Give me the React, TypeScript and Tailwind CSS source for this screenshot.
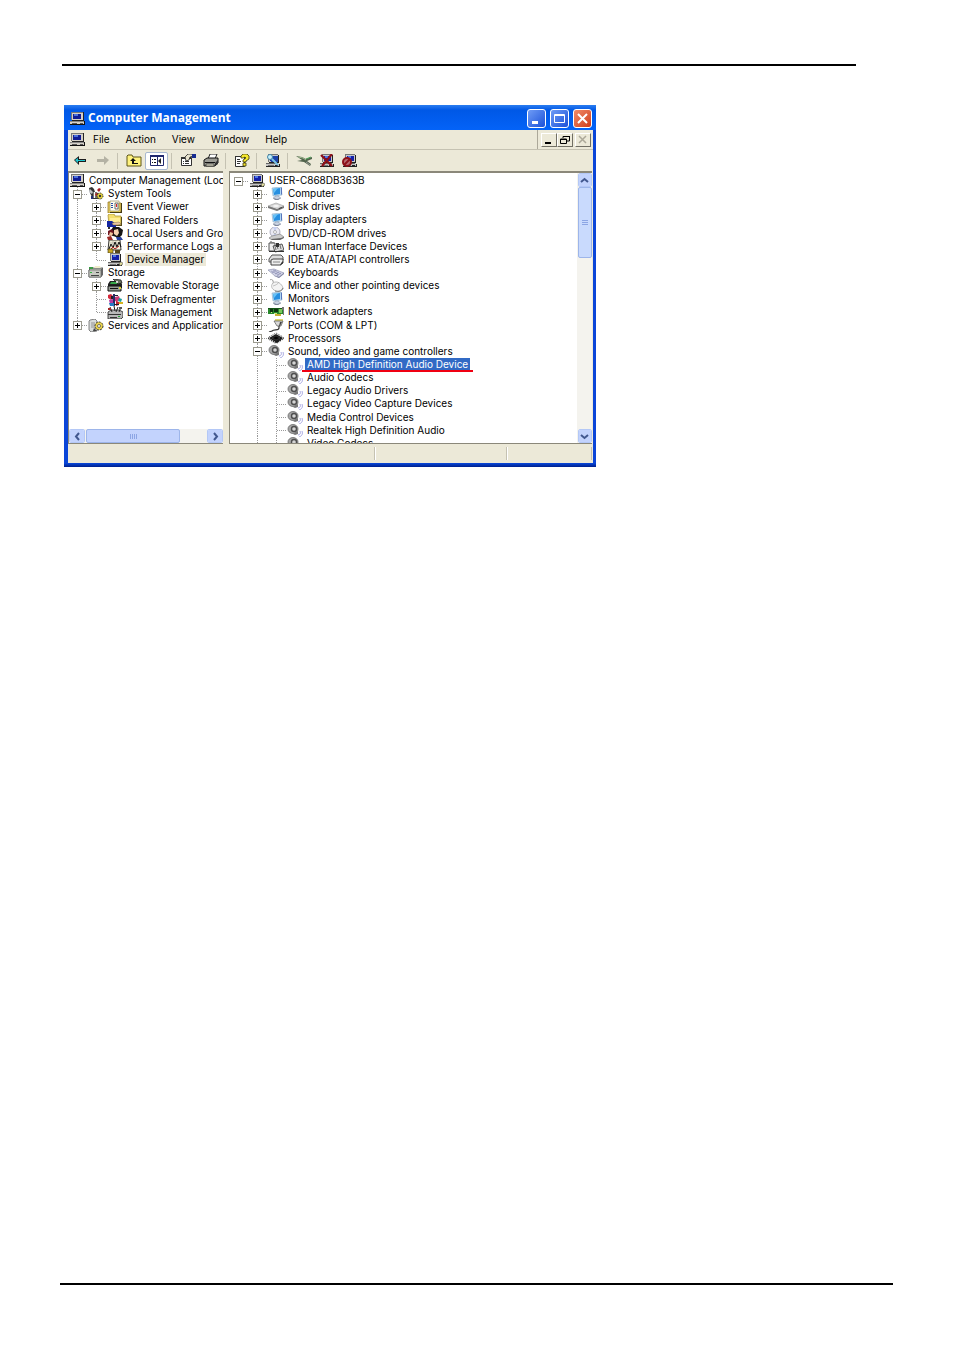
import React from 'react';

type IconProps = { name: string };

// one letter per guide column: l line, + / - box, p last + box, r root box, t tee, e elbow
type TreeNode = {
  guides: string;
  icon: string;
  label: string;
  state?: 'selected' | 'inactive';
};

const SCOPE_NODES: TreeNode[] = [
  { guides: '', icon: 'computer', label: 'Computer Management (Loc' },
  { guides: '-', icon: 'tools', label: 'System Tools' },
  { guides: 'l+', icon: 'event', label: 'Event Viewer' },
  { guides: 'l+', icon: 'shared', label: 'Shared Folders' },
  { guides: 'l+', icon: 'users', label: 'Local Users and Grou' },
  { guides: 'l+', icon: 'perf', label: 'Performance Logs a' },
  { guides: 'le', icon: 'pc', label: 'Device Manager', state: 'inactive' },
  { guides: '-', icon: 'storage', label: 'Storage' },
  { guides: 'l+', icon: 'removable', label: 'Removable Storage' },
  { guides: 'lt', icon: 'defrag', label: 'Disk Defragmenter' },
  { guides: 'le', icon: 'diskmgmt', label: 'Disk Management' },
  { guides: 'p', icon: 'services', label: 'Services and Application' },
];

const DEVICE_NODES: TreeNode[] = [
  { guides: 'r', icon: 'pc', label: 'USER-C868DB363B' },
  { guides: ' +', icon: 'monitor', label: 'Computer' },
  { guides: ' +', icon: 'disk', label: 'Disk drives' },
  { guides: ' +', icon: 'monitor', label: 'Display adapters' },
  { guides: ' +', icon: 'dvd', label: 'DVD/CD-ROM drives' },
  { guides: ' +', icon: 'hid', label: 'Human Interface Devices' },
  { guides: ' +', icon: 'ide', label: 'IDE ATA/ATAPI controllers' },
  { guides: ' +', icon: 'keyboard', label: 'Keyboards' },
  { guides: ' +', icon: 'mouse', label: 'Mice and other pointing devices' },
  { guides: ' +', icon: 'monitor', label: 'Monitors' },
  { guides: ' +', icon: 'network', label: 'Network adapters' },
  { guides: ' +', icon: 'port', label: 'Ports (COM & LPT)' },
  { guides: ' +', icon: 'cpu', label: 'Processors' },
  { guides: ' -', icon: 'sound', label: 'Sound, video and game controllers' },
  { guides: ' lt', icon: 'sound', label: 'AMD High Definition Audio Device', state: 'selected' },
  { guides: ' lt', icon: 'sound', label: 'Audio Codecs' },
  { guides: ' lt', icon: 'sound', label: 'Legacy Audio Drivers' },
  { guides: ' lt', icon: 'sound', label: 'Legacy Video Capture Devices' },
  { guides: ' lt', icon: 'sound', label: 'Media Control Devices' },
  { guides: ' lt', icon: 'sound', label: 'Realtek High Definition Audio' },
  { guides: ' lt', icon: 'sound', label: 'Video Codecs' },
];

const MENUS = ['File', 'Action', 'View', 'Window', 'Help'];

const TOOLBAR: string[] = [
  'back', 'forward', '|', 'up', 'showtree', '|', 'properties', 'print', '|', 'help', '|', 'scan', '|', 'update', 'uninstall', 'disable',
];

const TOOL_LABELS: Record<string, string> = {
  back: 'Back',
  forward: 'Forward',
  up: 'Up One Level',
  showtree: 'Show/Hide Console Tree',
  properties: 'Properties',
  print: 'Print',
  help: 'Help',
  scan: 'Scan for hardware changes',
  update: 'Update Driver',
  uninstall: 'Uninstall',
  disable: 'Disable',
};

const pcShape = (
  <>
    <path d="M3 0h10v8H3z" fill="#c8c8c8" />
    <path d="M3 0h10v1H4v7H3z" fill="#777" />
    <path d="M5 2h7v5H5z" fill="#1420a8" />
    <path d="M6 2h3v2H6z" fill="#4e78e8" />
    <path d="M13 1h1v8H4V8h9z" fill="#222" />
    <path d="M1 9h12l2 3H1z" fill="#c4c4c4" />
    <path d="M1 9h12v1H1z" fill="#666" />
    <path d="M1 12h14v1H1zM14 10h1v3h-1z" fill="#222" />
    <path d="M3 11h6v1H3z" fill="#777" />
    <path d="M10 11h3v1h-3z" fill="#222" />
  </>
);

const DRAWINGS: Record<string, React.ReactNode> = {
  computer: (
    <>
      <path d="M2 0h12v8H2z" fill="#d4d0c8" />
      <path d="M2 0h12v1H3v7H2z" fill="#777" />
      <path d="M4 2h8v5H4z" fill="#101c94" />
      <path d="M5 2h4v2H5z" fill="#4a70dc" />
      <path d="M14 0h1v9H3V8h11z" fill="#222" />
      <path d="M1 9h14v3H1z" fill="#d4d0c8" />
      <path d="M1 9h14v1H1z" fill="#888" />
      <path d="M1 12h15v1H1zM15 9h1v4h-1z" fill="#111" />
      <path d="M3 11h5v1H3zM11 11h3v1h-3z" fill="#555" />
    </>
  ),
  pc: (
    <>
      {pcShape}
      <path d="M12 10l3-1 1 2-3 2z" fill="#e0dc9c" stroke="#444" strokeWidth="0.5" />
    </>
  ),
  tools: (
    <>
      <path d="M1 1l3-1 2 2 1 3 3 1 1 6H5L2 6z" fill="#333" />
      <path d="M2 2l3 3-1 2-3-2z" fill="#bfc3c7" />
      <path d="M5 5h4v6H5z" fill="#777" />
      <path d="M6 5h1v6H6z" fill="#fff" />
      <path d="M9 3l2-2 2 1-2 3z" fill="#a51d23" />
      <path d="M7 7l2-1 1 2-2 1z" fill="#b82727" />
      <circle cx="12" cy="9" r="3" fill="#d9c83c" stroke="#222" strokeDasharray="1 1" />
      <path d="M11 8h2v2h-2z" fill="#333" />
      <path d="M3 9h2v3H3z" fill="#26307b" />
    </>
  ),
  event: (
    <>
      <path d="M1 2h5l1 1h7v8l-2 2H1z" fill="#e8cf62" stroke="#8a6c18" strokeWidth="0.7" />
      <path d="M3 1h9v10H3z" fill="#fffdf0" stroke="#8b824a" strokeWidth="0.6" />
      <path d="M4 3h2v1H4zM4 5h2v1H4zM4 7h2v1H4z" fill="#294ea9" />
      <path d="M8 3h3v6H8z" fill="#fff" stroke="#333" strokeWidth="0.7" />
      <path d="M9 4h1v3H9z" fill="#d22" />
      <path d="M14 3h1v10H3v-1h11z" fill="#443b13" />
    </>
  ),
  shared: (
    <>
      <path d="M1 1l1-1h5l1 2h6v9H2z" fill="#f3dd6c" stroke="#a58b2a" strokeWidth="0.7" />
      <path d="M3 4h10v5H3z" fill="#ffed94" />
      <path d="M14 3h1v9H6v-1h8z" fill="#55491a" />
      <path d="M0 7h5l4 3v3H0z" fill="#1425a0" />
      <path d="M5 9l7-1 2 2-3 1H6z" fill="#e9c6a0" stroke="#6c553f" strokeWidth="0.4" />
    </>
  ),
  users: (
    <>
      <path d="M6 0h6l4 3-1 5-3 3-7-2-2-4z" fill="#151515" />
      <path d="M7 3l4-1 1 4-2 3-3-2z" fill="#f6d2b1" />
      <path d="M1 4l4-2 2 3-2 4-4-1z" fill="#6f1722" />
      <path d="M3 5l3 1-1 3-3-1z" fill="#efc59c" />
      <path d="M5 9l4 1 2 3H4z" fill="#fff" />
      <path d="M9 10h5l2 3h-6z" fill="#253e9c" />
      <path d="M0 10l4-1 2 4H1z" fill="#9b2a25" />
      <path d="M1 0h2v2H1z" fill="#333" />
    </>
  ),
  perf: (
    <>
      <path d="M2 0h11l1 10H1z" fill="#f5f1d8" stroke="#222" strokeWidth="0.9" />
      <path d="M3 3h9M3 6h9M6 1v9M9 1v9" stroke="#8d8d8d" strokeWidth="0.5" />
      <path d="M2 9l2-5 2 4 2-6 2 5 2-5 2 5" fill="none" stroke="#111" />
      <path d="M3 10l3-3 2 2 4-3" fill="none" stroke="#b32020" />
      <path d="M1 9h5v4H1z" fill="#c8a726" stroke="#3a300a" strokeWidth="0.6" />
      <path d="M8 10h5v3H8z" fill="#55471a" />
    </>
  ),
  storage: (
    <>
      <path d="M1 4l2-2h12l-2 2v7H1z" fill="#b9bdb4" stroke="#444" strokeWidth="0.8" />
      <path d="M1 4h12v7H1z" fill="#c8cac2" stroke="#555" strokeWidth="0.6" />
      <path d="M13 4l2-2v7l-2 2z" fill="#666" />
      <path d="M1 1h4v2H1z" fill="#3b9a45" />
      <path d="M8 6h3v1H8zM3 9h8v1H3z" fill="#444" />
      <path d="M2 6h2v1H2z" fill="#36b441" />
      <path d="M7 0h5l1 2H6z" fill="#efeccb" />
    </>
  ),
  removable: (
    <>
      <path d="M1 5l2-3h9l3 3v4H1z" fill="#222" />
      <path d="M4 3h6l2 2H3z" fill="#35a748" />
      <path d="M6 0l8 1 1 3-4 1z" fill="#6c7563" stroke="#111" strokeWidth="0.7" />
      <path d="M1 7h13v5H1z" fill="#969c94" stroke="#111" />
      <path d="M3 9h8v1H3z" fill="#111" />
      <path d="M12 8h2v2h-2z" fill="#ded334" />
      <circle cx="10" cy="3" r="1" fill="#fff" />
    </>
  ),
  defrag: (
    <>
      <path d="M1 2l3-1 3 3-3 3-3-2z" fill="#d5283a" />
      <path d="M6 1h2v12H6z" fill="#2a2a6a" />
      <path d="M8 4l4-1 1 3-3 3-2-1z" fill="#ca3f78" />
      <path d="M2 7l4-1v4l-3 1z" fill="#b63aa0" />
      <path d="M12 5l3 1-1 3-3-1z" fill="#1b9f9b" />
      <path d="M2 10h5v3H3z" fill="#247ac5" />
      <path d="M9 8l3 1v3l-3 1z" fill="#c62134" />
      <path d="M12 9h4v2h-4z" fill="#d7b51f" />
      <path d="M4 3h2v3H4zM8 2h3v1H8zM7 11h5v1H7z" fill="#222" />
    </>
  ),
  diskmgmt: (
    <>
      <path d="M1 6l3-2h8l4 2v5l-2 2H1z" fill="#b8b8b8" stroke="#222" strokeWidth="0.8" />
      <path d="M1 8h13v1H1zM3 11h7v1H3z" fill="#333" />
      <path d="M3 1l2 5M7 0l1 5M11 1L9 6M14 1l-2 5" stroke="#222" />
      <path d="M1 2h3v2H1z" fill="#a42727" />
      <path d="M12 1h3v2h-3z" fill="#555" />
      <path d="M11 10h2v1h-2z" fill="#22a033" />
    </>
  ),
  services: (
    <>
      <path d="M2 1l5-1 2 2v10l-6 1-2-2V2z" fill="#d9dcdb" stroke="#555" strokeWidth="0.7" />
      <path d="M3 4h4M3 6h4M3 8h4" stroke="#777" strokeWidth="0.7" />
      <circle cx="11" cy="7" r="4" fill="#ead34b" stroke="#333" strokeDasharray="2 1" />
      <circle cx="11" cy="7" r="1.5" fill="#fff" stroke="#444" strokeWidth="0.7" />
      <path d="M6 9l3 3H5z" fill="#444" />
    </>
  ),
  monitor: (
    <>
      <path d="M4 1l9-1 1 8-9 1z" fill="#b2d8f4" stroke="#8cadc8" strokeWidth="0.6" />
      <path d="M5 2l7-1v6l-6 1z" fill="#278fe0" />
      <path d="M5 2l5-1-4 5z" fill="#68c2f6" />
      <path d="M13 0l1 1v7l-1-1z" fill="#5775bc" />
      <path d="M7 9h4v1l2 1-4 2-4-2 2-1z" fill="#c9d3e3" stroke="#8790a4" strokeWidth="0.5" />
      <path d="M5 11l4 1 4-1-3 2H7z" fill="#7e879b" />
    </>
  ),
  disk: (
    <>
      <path d="M0 6l8-3 8 3-7 4z" fill="#d8d8d8" stroke="#999" strokeWidth="0.6" />
      <path d="M0 6l9 3 7-3v2l-7 3-9-3z" fill="#777" />
      <ellipse cx="8" cy="6" rx="3" ry="1" fill="#f6f6f6" />
      <path d="M11 8l3-1v1l-3 1z" fill="#444" />
    </>
  ),
  dvd: (
    <>
      <circle cx="7" cy="5" r="5" fill="#e9e9f3" stroke="#9c9cae" strokeWidth="0.8" />
      <path d="M7 5L5 0h4zM7 5l2 5-4-1z" fill="#c6cff0" />
      <circle cx="7" cy="5" r="1.5" fill="#fff" stroke="#888" strokeWidth="0.6" />
      <path d="M1 11l3-2 8-2 4 3-3 2-9 1z" fill="#ccc" stroke="#777" strokeWidth="0.6" />
      <path d="M3 12l10-1 3-1v1l-4 2H4z" fill="#666" />
    </>
  ),
  hid: (
    <>
      <path d="M1 3h6v8H1z" fill="#eee" stroke="#555" />
      <path d="M3 1v2M5 2v1" stroke="#555" />
      <path d="M5 6l9-2 2 6-9 2z" fill="#ddd" stroke="#333" strokeWidth="0.8" />
      <path d="M7 6l1 4M9 6l1 3M12 5l1 4" stroke="#555" strokeWidth="0.8" />
      <path d="M8 3h3v4H8z" fill="#333" />
      <path d="M1 11h15v1H1z" fill="#333" />
    </>
  ),
  ide: (
    <>
      <path d="M1 6l3-4h9l2 2v3l-2 2H1z" fill="#ddd" stroke="#555" />
      <path d="M3 7l2-1h10v4l-3 2H3z" fill="#eee" stroke="#444" />
      <path d="M5 9h7" stroke="#888" />
      <path d="M13 10l2-2v2l-3 3z" fill="#333" />
    </>
  ),
  keyboard: (
    <>
      <path d="M0 4l6-1 10 4-5 4-4-1z" fill="#d4d6e8" stroke="#9093b0" strokeWidth="0.7" />
      <path d="M3 5l8 4M5 4l8 4M4 7l4-3M7 8l4-2M9 10l4-3" stroke="#8185ac" strokeWidth="0.6" />
      <path d="M6 10l5 1 5-4v1l-5 4z" fill="#777b9c" />
    </>
  ),
  mouse: (
    <>
      <path d="M2 1c2-2 4 1 3 4" fill="none" stroke="#999" />
      <path d="M5 4c4-3 9 1 10 5-1 4-7 4-9 2-3-2-3-5-1-7z" fill="#f4f4f4" stroke="#aaa" strokeWidth="0.8" />
      <path d="M5 7c3-1 5-2 6-4" fill="none" stroke="#aaa" strokeWidth="0.7" />
      <path d="M7 12c4 1 7 0 8-3" fill="none" stroke="#777" />
    </>
  ),
  network: (
    <>
      <path d="M0 3h15v6H0z" fill="#27872b" />
      <path d="M0 3h15v1H0z" fill="#165419" />
      <path d="M2 4h3v3H2zM6 4h4v3H6z" fill="#0e3512" />
      <path d="M11 4h3v4h-3z" fill="#7bc95b" />
      <path d="M7 9h6v2H7z" fill="#c6b135" />
      <path d="M14 2h2v8h-1V5h-1z" fill="#777" />
      <path d="M3 7h1v1H3zM6 8h3v1H6z" fill="#d1e783" />
    </>
  ),
  port: (
    <>
      <path d="M7 0h8v2H7z" fill="#e0d570" />
      <path d="M6 2h9l-2 5H9z" fill="#d9d9d9" stroke="#555" strokeWidth="0.7" />
      <path d="M11 7v2c0 3-5 1-7 3l-3 1" fill="none" stroke="#333" strokeWidth="1.2" />
      <path d="M12 3h2l-2 4h-1z" fill="#444" />
    </>
  ),
  cpu: (
    <>
      <path d="M1 6l7-4 7 4-6 5z" fill="#1c1c1c" />
      <path d="M4 6l4-2 4 2-4 2z" fill="#050505" stroke="#666" strokeWidth="0.4" />
      <path d="M0 6l8 5 8-5" fill="none" stroke="#222" strokeWidth="2" strokeDasharray="1 1" />
      <path d="M1 5l7-4 7 4" fill="none" stroke="#444" strokeDasharray="1 1" />
    </>
  ),
  sound: (
    <>
      <ellipse cx="6" cy="5" rx="5" ry="4.5" fill="#a6a6a6" stroke="#6a6a6a" strokeWidth="0.8" />
      <ellipse cx="7" cy="5" rx="3.2" ry="3.2" fill="#4e4e4e" />
      <ellipse cx="7" cy="5" rx="1.8" ry="1.8" fill="#d4d4d4" />
      <path d="M6 10l5-3v3l-3 1z" fill="#777" />
      <path d="M11 11c2 0 3-2 2-4M12 13c3-1 4-3 3-6" fill="none" stroke="#a9a9e2" />
    </>
  ),
  back: (
    <>
      <path d="M2 6l5-4v3h7v3H7v3z" fill="#1c1c1c" />
      <path d="M3 6l3-2v2h7v1H6v2z" fill="#1fc5cf" />
    </>
  ),
  forward: <path d="M14 6L9 2v3H2v3h7v3z" fill="#b4b2a4" />,
  up: (
    <>
      <path d="M1 2l1-1h4l1 2h8v9H1z" fill="#fff27c" stroke="#5c5416" />
      <path d="M4 7l3-3 3 3H8v2h4v1H6V7z" fill="#111" />
    </>
  ),
  showtree: (
    <>
      <path d="M1.500 1.500h13v10h-13z" fill="#fff" stroke="#222a6f" />
      <path d="M1 1h14v2H1z" fill="#222a6f" />
      <path d="M8.500 3v9" stroke="#222a6f" />
      <path d="M3 5h1v1H3zM5 5h2v1H5zM3 8h1v1H3zM5 8h2v1H5z" fill="#111" />
      <path d="M12 4v6L9 7z" fill="#222" />
    </>
  ),
  properties: (
    <>
      <path d="M1.500 3.500h10v8h-10z" fill="#fff" stroke="#333" />
      <path d="M1 3h10v2H1z" fill="#333" />
      <path d="M3 7h1v1H3zM5 7h4v1H5zM3 9h1v1H3zM5 9h4v1H5z" fill="#333" />
      <path d="M5 3l3-3h4l1 2-3 1-1 3-3 1z" fill="#e8e4ce" stroke="#222" strokeWidth="0.8" />
      <path d="M12 0h4v4h-4z" fill="#172c91" />
    </>
  ),
  print: (
    <>
      <path d="M5 5l2-5h7l-2 5z" fill="#fff" stroke="#222" />
      <path d="M1 6l3-2h11v5l-3 3H1z" fill="#9b9b94" stroke="#111" />
      <path d="M2 8h10v1H2z" fill="#111" />
      <path d="M3 10h8v2H3z" fill="#e0dfca" stroke="#111" strokeWidth="0.6" />
      <path d="M12 9l3-3v4l-3 2z" fill="#333" />
    </>
  ),
  help: (
    <>
      <path d="M1.500 2.500h9v10h-9z" fill="#fff" stroke="#333" />
      <path d="M1 2h10v1H1zM3 5h3v1H3zM3 7h4v1H3zM3 9h3v1H3z" fill="#333" />
      <path d="M7 4V2l2-2h4l2 2v3l-3 2v1H9V6l3-2-1-1-2 1zM9 9h3v3H9z" fill="#f5e72d" stroke="#3b380a" strokeWidth="0.8" />
    </>
  ),
  scan: (
    <>
      {pcShape}
      <path d="M5 2h8v6H6z" fill="#1b42a8" />
      <circle cx="5" cy="3" r="2.5" fill="#c7effa" stroke="#4387a8" />
      <path d="M7 5l6 6" stroke="#7cc3e5" strokeWidth="2" />
    </>
  ),
  update: (
    <>
      <path d="M0 2l6 1 4 2 6-2v2l-5 2 4 3-1 2-6-4-7-1 5-1z" fill="#51634c" />
      <path d="M2 3l5 1 3 2" stroke="#9fb98f" fill="none" />
      <path d="M10 8l4 3" stroke="#999" />
      <path d="M10 5l5-2" stroke="#46a052" />
    </>
  ),
  uninstall: (
    <>
      {pcShape}
      <path d="M2 1l11 11M13 0L3 12" stroke="#8d1018" strokeWidth="2.2" />
    </>
  ),
  disable: (
    <>
      {pcShape}
      <circle cx="5" cy="8" r="4" fill="#b56a72" stroke="#8d1018" strokeWidth="2" />
      <path d="M2 11l6-6" stroke="#8d1018" strokeWidth="2" />
    </>
  ),
};

const Icon: React.FC<IconProps> = ({ name }) => (
  <svg className="shrink-0" width="16" height="13" viewBox="0 0 16 13" aria-hidden="true">
    {DRAWINGS[name]}
  </svg>
);

const Guide: React.FC<{ kind: string }> = ({ kind }) => {
  const isBox = '+-pr'.includes(kind);
  const up = 'l+-pte'.includes(kind);
  const down = 'l+-t'.includes(kind);
  const across = isBox || kind === 't' || kind === 'e';
  return (
    <svg className="shrink-0" width="19" height="14" viewBox="0 0 19 14" aria-hidden="true">
      <g stroke="#9a9a9a" strokeDasharray="1 1" shapeRendering="crispEdges">
        {up && <path d="M8.5 0v7" />}
        {down && <path d="M8.5 8v6" />}
        {across && <path d="M9 7.5h10" />}
      </g>
      {isBox && (
        <g shapeRendering="crispEdges">
          <path d="M4.5 3.5h8v8h-8z" fill="#fff" stroke="#9b9a8e" />
          <path d="M6 7.5h5" stroke="#000" />
          {(kind === '+' || kind === 'p') && <path d="M8.5 5v5" stroke="#000" />}
        </g>
      )}
    </svg>
  );
};

const TreeRow: React.FC<{ node: TreeNode }> = ({ node }) => (
  <li role="treeitem" aria-selected={node.state === 'selected'} className="flex items-center min-h-0">
    {node.guides.split('').map((kind, i) => (
      <Guide key={i} kind={kind} />
    ))}
    <Icon name={node.icon} />
    <span
      className={
        node.state === 'selected'
          ? 'relative ml-[2px] h-[13px] px-[2px] bg-[#316ac5] text-white whitespace-nowrap'
          : node.state === 'inactive'
            ? 'ml-[2px] h-[13px] px-[2px] bg-[#ece9d8] whitespace-nowrap'
            : 'ml-[2px] h-[13px] px-[2px] whitespace-nowrap'
      }
    >
      {node.label}
      {node.state === 'selected' && <span className="absolute -left-[3px] -right-[3px] -bottom-px h-[2px] bg-[#f00012]" />}
    </span>
  </li>
);

const Chevron: React.FC<{ d: string }> = ({ d }) => (
  <svg width="9" height="9" viewBox="0 0 9 9" aria-hidden="true">
    <path d={d} fill="none" stroke="#42588f" strokeWidth="2" />
  </svg>
);

const scrollButton =
  'flex items-center justify-center shrink-0 h-[14px] rounded-xs border border-white bg-[#c3d3fd] outline outline-[#b4c8f6] -outline-offset-1';

const captionButton = 'w-[19px] h-[19px] rounded-[3px] border border-white bg-linear-to-br';

const childButton = 'w-[16px] h-[14px] border border-t-white border-l-white border-r-[#716f64] border-b-[#716f64]';

const App: React.FC = () => {
  return (
    <div className="min-h-screen flex flex-col bg-white text-black font-[Inter,sans-serif] text-[10px] leading-[13px]">
      <header className="mt-[64px] ml-[62px] mr-[98px] border-t-2 border-black" />

      <main className="flex-1 mt-[39px] ml-[64px] mr-[98px]">
        <section className="w-full max-w-[532px] bg-[#0a45d8]" aria-label="Computer Management">
          {/* Title bar */}
          <div className="flex items-center h-[25px] pt-px pl-[5px] pr-[4px] bg-linear-to-b from-[#2a7df0] via-[#0058e6] via-20% to-[#0463f8]">
            <Icon name="computer" />
            <h1 className="flex-1 pl-[3px] font-['Open_Sans',sans-serif] text-[12px] leading-[16px] font-bold text-white whitespace-nowrap">Computer Management</h1>
            <div className="flex gap-[4px]">
              <button aria-label="Minimize" className={`${captionButton} from-[#6f9bf5] to-[#1c4fd8]`}>
                <svg width="17" height="17" viewBox="0 0 17 17"><path d="M4 11h6v3H4z" fill="#fff" /></svg>
              </button>
              <button aria-label="Maximize" className={`${captionButton} from-[#6f9bf5] to-[#1c4fd8]`}>
                <svg width="17" height="17" viewBox="0 0 17 17"><path d="M3.500 4.500h10v8h-10zM3 5.500h10" fill="none" stroke="#fff" /></svg>
              </button>
              <button aria-label="Close" className={`${captionButton} from-[#f08a68] to-[#cf3a14]`}>
                <svg width="17" height="17" viewBox="0 0 17 17"><path d="M4 4l9 9M13 4l-9 9" stroke="#fff" strokeWidth="2" /></svg>
              </button>
            </div>
          </div>

          <div className="mx-[4px] mr-[3px] bg-[#ece9d8]">
            {/* Menu bar */}
            <div className="flex items-stretch h-[20px] border-b border-[#c5c2b2] pr-[2px]">
              <div className="flex items-center pl-[1px]">
                <Icon name="computer" />
              </div>
              <nav className="flex-1 flex items-center">
                {MENUS.map((menu) => (
                  <button key={menu} className="px-[8px]">{menu}</button>
                ))}
              </nav>
              <div className="flex items-center border-l border-[#aca899] pl-[3px]">
                <button aria-label="Minimize child window" className={childButton}>
                  <svg width="14" height="12" viewBox="0 0 14 12"><path d="M3 8h6v2H3z" /></svg>
                </button>
                <button aria-label="Restore child window" className={`${childButton} mr-[2px]`}>
                  <svg width="14" height="12" viewBox="0 0 14 12"><path d="M5 4V2.500h6.500V7H9M5 2.500h7M2.500 5h6v4.500h-6zM2 5.500h7" fill="none" stroke="#000" /></svg>
                </button>
                <button aria-label="Close child window" disabled className={childButton}>
                  <svg width="14" height="12" viewBox="0 0 14 12"><path d="M3 2l7 7M10 2L3 9" stroke="#aca899" strokeWidth="1.500" /></svg>
                </button>
              </div>
            </div>

            {/* Toolbar */}
            <div className="flex items-center h-[21px]">
              {TOOLBAR.map((tool, i) =>
                tool === '|' ? (
                  <span key={i} className="w-px h-[16px] mx-[3px] mr-[4px] bg-[#c5c2b2]" />
                ) : (
                  <button
                    key={tool}
                    aria-label={TOOL_LABELS[tool]}
                    className={
                      tool === 'showtree'
                        ? 'flex items-center justify-center w-[23px] h-[18px] rounded-[2px] border border-[#a8b8d0] bg-white'
                        : 'flex items-center justify-center w-[23px] h-[18px]'
                    }
                  >
                    <Icon name={tool} />
                  </button>
                ),
              )}
            </div>

            {/* Panes */}
            <div className="flex gap-[6px] h-[273px]">
              <div className="flex flex-col justify-between w-[155px] shrink-0 bg-white border-l border-t-2 border-b border-[#8b887a] overflow-hidden">
                <ul role="tree" className="grid auto-rows-fr h-[159px] pt-px">
                  {SCOPE_NODES.map((node) => (
                    <TreeRow key={node.label} node={node} />
                  ))}
                </ul>
                <div className="flex h-[14px] bg-[#f4f3ee]">
                  <button aria-label="Scroll left" className={`${scrollButton} w-[16px]`}><Chevron d="M6 1L3 4.500L6 8" /></button>
                  <div className="flex items-center justify-center gap-px w-[94px] h-[14px] ml-px rounded-xs border border-[#9db5ea] bg-[#c3d3fd]">
                    {[0, 1, 2, 3].map((n) => (
                      <span key={n} className="w-px h-[5px] bg-[#8ca5e4]" />
                    ))}
                  </div>
                  <span className="flex-1" />
                  <button aria-label="Scroll right" className={`${scrollButton} w-[16px]`}><Chevron d="M3 1l3 3.500L3 8" /></button>
                </div>
              </div>

              <div className="flex flex-1 min-w-0 bg-white border-l border-t-2 border-b border-[#8b887a] mr-px overflow-hidden">
                <ul role="tree" className="flex-1 min-w-0 grid auto-rows-fr h-[277px] pt-px">
                  {DEVICE_NODES.map((node) => (
                    <TreeRow key={node.label} node={node} />
                  ))}
                </ul>
                <div className="flex flex-col items-center w-[15px] bg-[#f4f3ee]">
                  <button aria-label="Scroll up" className={`${scrollButton} w-[14px]`}><Chevron d="M1 6l3.500-3L8 6" /></button>
                  <div className="flex flex-col items-center justify-center gap-px w-[14px] h-[71px] rounded-xs border border-[#9db5ea] bg-[#c9dafd]">
                    {[0, 1, 2].map((n) => (
                      <span key={n} className="w-[6px] h-px bg-[#8ca5e4]" />
                    ))}
                  </div>
                  <span className="flex-1" />
                  <button aria-label="Scroll down" className={`${scrollButton} w-[14px]`}><Chevron d="M1 3l3.500 3L8 3" /></button>
                </div>
              </div>
            </div>

            {/* Status bar */}
            <div className="flex h-[19px] py-[3px] pr-px">
              <span className="flex-1 border-r border-[#c5c2b2]" />
              <span className="w-[132px] border-l border-r border-l-white border-r-[#c5c2b2]" />
              <span className="w-[85px] border-l border-r border-l-white border-r-[#c5c2b2]" />
            </div>
          </div>
          <div className="h-[4px] bg-linear-to-b from-[#0a48dc] to-[#001f8c]" />
        </section>
      </main>

      <footer className="ml-[60px] mr-[61px] mb-[67px] border-t-2 border-black" />
    </div>
  );
};

export default App;
